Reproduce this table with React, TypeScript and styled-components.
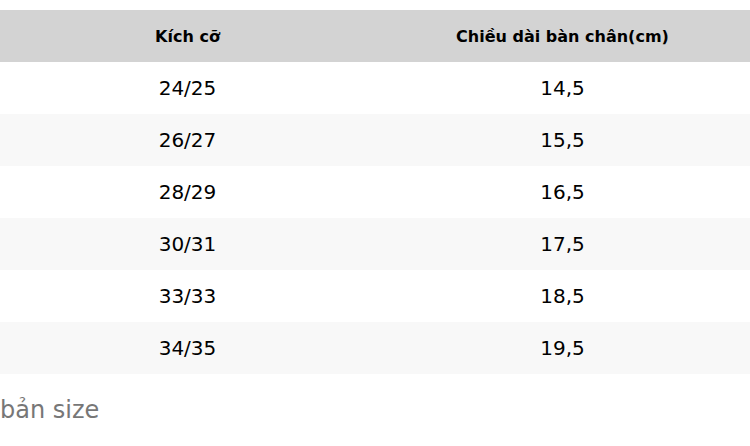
import styled, { createGlobalStyle } from 'styled-components';

const GlobalStyle = createGlobalStyle`
  html, body {
    margin: 0;
    padding: 0;
    background: #ffffff;
    font-family: "DejaVu Sans", sans-serif;
  }
`;

const Page = styled.div`
  padding-top: 10px;
  width: 750px;
`;

const Table = styled.table`
  width: 100%;
  border-collapse: collapse;
  table-layout: fixed;
`;

const HeadCell = styled.th`
  height: 52px;
  padding: 0;
  background: #d3d3d3;
  color: #000;
  font-size: 16px;
  font-weight: bold;
  text-align: center;
`;

const Row = styled.tr<{ $striped: boolean }>`
  background: ${(p) => (p.$striped ? '#f8f8f8' : '#ffffff')};
`;

const Cell = styled.td`
  height: 52px;
  padding: 0;
  font-size: 20px;
  color: #000;
  text-align: center;
`;

const Caption = styled.div`
  margin-top: 20px;
  font-size: 24px;
  line-height: 32px;
  color: #777777;
`;

const sizes = [
  ['24/25', '14,5'],
  ['26/27', '15,5'],
  ['28/29', '16,5'],
  ['30/31', '17,5'],
  ['33/33', '18,5'],
  ['34/35', '19,5'],
];

export default function App() {
  return (
    <>
      <GlobalStyle />
      <Page>
        <Table>
          <thead>
            <tr>
              <HeadCell>Kích cỡ</HeadCell>
              <HeadCell>Chiều dài bàn chân(cm)</HeadCell>
            </tr>
          </thead>
          <tbody>
            {sizes.map(([size, length], i) => (
              <Row key={size + i} $striped={i % 2 === 1}>
                <Cell>{size}</Cell>
                <Cell>{length}</Cell>
              </Row>
            ))}
          </tbody>
        </Table>
        <Caption>bản size</Caption>
      </Page>
    </>
  );
}
